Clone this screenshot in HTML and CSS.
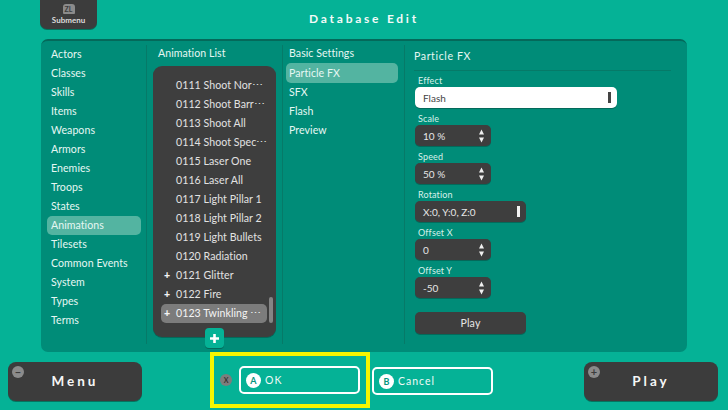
FILE: index.html
```html
<!DOCTYPE html>
<html lang="en">
<head>
<meta charset="utf-8">
<title>Database Edit</title>
<link rel="stylesheet" href="styles.css">
</head>
<body>
<div class="screen">
  <header class="header">
    <div class="submenu"><span class="zl">ZL</span><span>Submenu</span></div>
    <h1 class="title">Database Edit</h1>
  </header>
  <main class="panel">
    <nav class="side">
      <div class="item">Actors</div><div class="item">Classes</div><div class="item">Skills</div>
      <div class="item">Items</div><div class="item">Weapons</div><div class="item">Armors</div>
      <div class="item">Enemies</div><div class="item">Troops</div><div class="item">States</div>
      <div class="item active">Animations</div><div class="item">Tilesets</div><div class="item">Common Events</div>
      <div class="item">System</div><div class="item">Types</div><div class="item">Terms</div>
    </nav>
    <section class="anim">
      <div class="col-title">Animation List</div>
      <div class="list">
        <div class="row">0111 Shoot Nor⋯</div>
        <div class="row">0112 Shoot Barr⋯</div>
        <div class="row">0113 Shoot All</div>
        <div class="row">0114 Shoot Spec⋯</div>
        <div class="row">0115 Laser One</div>
        <div class="row">0116 Laser All</div>
        <div class="row">0117 Light Pillar 1</div>
        <div class="row">0118 Light Pillar 2</div>
        <div class="row">0119 Light Bullets</div>
        <div class="row">0120 Radiation</div>
        <div class="row"><span class="mark">+</span>0121 Glitter</div>
        <div class="row"><span class="mark">+</span>0122 Fire</div>
        <div class="row selected"><span class="mark">+</span>0123 Twinkling ⋯</div>
        <div class="scroll"></div>
        <div class="add"><svg width="11" height="11" viewBox="0 0 11 11"><path d="M4.200 1h2.600v3.200H10v2.600H6.800V10H4.200V6.800H1V4.200h3.200z" fill="#fff"/></svg></div>
      </div>
    </section>
    <section class="basic">
      <div class="item head">Basic Settings</div>
      <div class="item active">Particle FX</div>
      <div class="item">SFX</div>
      <div class="item">Flash</div>
      <div class="item">Preview</div>
    </section>
    <section class="detail">
      <div class="detail-title">Particle FX</div>
      <div class="field"><label class="label">Effect</label>
        <div class="input light w-wide"><span>Flash</span><i class="bar dark"></i></div></div>
      <div class="field"><label class="label">Scale</label>
        <div class="input w-num"><span>10 %</span><svg class="spin" width="5" height="14" viewBox="0 0 5 14"><path d="M2.500 0.500L5 5.500H0zM0 8.500H5L2.500 13.500z" fill="#f0f0f0"/></svg></div></div>
      <div class="field"><label class="label">Speed</label>
        <div class="input w-num"><span>50 %</span><svg class="spin" width="5" height="14" viewBox="0 0 5 14"><path d="M2.500 0.500L5 5.500H0zM0 8.500H5L2.500 13.500z" fill="#f0f0f0"/></svg></div></div>
      <div class="field"><label class="label">Rotation</label>
        <div class="input w-mid"><span>X:0, Y:0, Z:0</span><i class="bar"></i></div></div>
      <div class="field"><label class="label">Offset X</label>
        <div class="input w-num"><span>0</span><svg class="spin" width="5" height="14" viewBox="0 0 5 14"><path d="M2.500 0.500L5 5.500H0zM0 8.500H5L2.500 13.500z" fill="#f0f0f0"/></svg></div></div>
      <div class="field"><label class="label">Offset Y</label>
        <div class="input w-num"><span>-50</span><svg class="spin" width="5" height="14" viewBox="0 0 5 14"><path d="M2.500 0.500L5 5.500H0zM0 8.500H5L2.500 13.500z" fill="#f0f0f0"/></svg></div></div>
      <button class="play-small">Play</button>
    </section>
  </main>
  <footer class="footer">
    <div class="big"><span class="hint">−</span>Menu</div>
    <div class="center">
      <div class="focus">
        <span class="x">X</span>
        <div class="outline"><span class="circle">A</span>OK</div>
      </div>
      <div class="outline cancel"><span class="circle">B</span>Cancel</div>
    </div>
    <div class="big"><span class="hint">+</span>Play</div>
  </footer>
</div>
</body>
</html>
```
FILE: styles.css
```css
* { box-sizing: border-box; }
html, body { margin: 0; padding: 0; }
body {
  width: 728px; height: 410px; overflow: hidden;
  background: #05b296; color: #e8f5f1;
  font-family: Lato, "Noto Sans", sans-serif;
  font-size: 10.6px; letter-spacing: .05px;
}
.screen { width: 728px; height: 410px; display: flex; flex-direction: column; }

.header { height: 39px; position: relative; display: flex; justify-content: center; }
.title { margin: 10px 0 0; font-size: 12px; font-weight: 700; letter-spacing: 2.75px; line-height: 18px; color: #f2faf8; }
.submenu {
  position: absolute; left: 40px; top: 0; width: 57px; height: 29px;
  background: #3c3c3c; border-radius: 0 0 7px 7px; box-shadow: 0 1px 0 #04745f;
  display: flex; flex-direction: column; align-items: center; justify-content: flex-end;
  font-size: 8px; font-weight: 700; letter-spacing: 0; line-height: 11px; padding-bottom: 3px; color: #ddd;
}
.zl { width: 12px; height: 10px; margin-bottom: 1px; background: #8b8b8b; color: #3c3c3c; font-size: 7px; font-weight: 700; line-height: 10px; text-align: center; border-radius: 3px 3px 1px 1px; letter-spacing: 0; }

.panel {
  height: 313px; width: 646px; margin-left: 41px;
  display: flex; background: #008c78;
  border-top: 2px solid #04695a; border-radius: 7px;
}
.item { height: 19px; line-height: 18px; white-space: nowrap; color: #e6f7f3; }
.item.active { background: #53b4a1; border-radius: 5px; line-height: 19px; }

.side { width: 106px; margin: 4px 0 8px; padding: 0 5px 0 6px; border-right: 1px solid #067a68; }
.side .item { padding-left: 4px; }

.anim { width: 136px; margin: 4px 0 8px; padding-left: 6px; border-right: 1px solid #067a68; }
.col-title { height: 21px; line-height: 17px; padding-left: 5px; color: #e6f7f3; }
.list {
  position: relative; width: 123px; height: 271px;
  background: #3e3e3e; border-radius: 9px; padding: 10px 8px;
  box-shadow: 0 1px 0 #04695a;
}
.row { height: 19px; line-height: 18px; padding-left: 15px; position: relative; color: #e2e2e2; white-space: nowrap; }
.row.selected { background: #7c7c7c; border-radius: 5px; width: 106px; color: #f4f4f4; line-height: 19px; }
.mark { position: absolute; left: 3px; top: 0; color: #f4f4f4; font-weight: 900; letter-spacing: 0; }
.scroll { position: absolute; left: 116px; top: 231px; width: 4px; height: 26px; background: #858585; border-radius: 2px; }
.add {
  position: absolute; left: 52px; top: 262px; width: 19px; height: 20px;
  background: #05b296; border-radius: 4px; box-shadow: 0 1px 0 #04695a;
  display: flex; align-items: center; justify-content: center;
}

.basic { width: 122px; margin: 4px 0 8px; padding: 0 6px 0 3px; border-right: 1px solid #067a68; }
.basic .item { padding-left: 3px; }
.basic .head { height: 18px; line-height: 17px; }
.basic .active { height: 20px; line-height: 20px; }

.detail { flex: 1; padding: 8px 16px 0 9px; }
.detail-title { height: 22px; margin-bottom: -1px; line-height: 15px; border-bottom: 1px solid #067a68; letter-spacing: .6px; color: #e6f7f3; }
.field { height: 38px; margin-left: 1px; }
.label { display: block; height: 17px; padding: 4px 0 0 3px; line-height: 13px; font-size: 9px; letter-spacing: .15px; color: #d6f1ea; }
.input {
  height: 21px; background: #3e3e3e; border-radius: 5px;
  box-shadow: 0 1px 0 #04695a; color: #e6e6e6;
  display: flex; align-items: center; justify-content: space-between;
  padding: 0 6px 0 8px; font-size: 10px; letter-spacing: 0;
}
.input.light { background: #fff; color: #444; }
.w-wide { width: 202px; }
.w-num { width: 76px; padding-right: 7px; }
.w-mid { width: 111px; }
.bar { width: 3px; height: 11px; background: #f2f2f2; display: block; }
.bar.dark { background: #444; }
.spin { display: block; }
.play-small {
  display: block; width: 111px; height: 22px; margin: 14px 0 0 1px; padding: 0;
  border: 0; border-radius: 5px; background: #3e3e3e; color: #e6e6e6;
  box-shadow: 0 1px 0 #04695a; font: inherit; letter-spacing: .2px;
}

.footer { position: relative; flex: 1; display: flex; justify-content: space-between; padding: 10px 10px 0 8px; }
.big {
  position: relative; width: 134px; height: 39px; padding-bottom: 2px; background: #3c3c3c; border-radius: 8px;
  box-shadow: 0 1px 0 #04745f; display: flex; align-items: center; justify-content: center;
  font-size: 13.5px; font-weight: 700; letter-spacing: 3px; color: #f6f6f6;
}
.hint {
  position: absolute; left: 4px; top: 4px; width: 12px; height: 12px; border-radius: 50%;
  background: #8b8b8b; color: #3c3c3c; font-size: 11px; line-height: 12px; text-align: center; letter-spacing: 0;
}
.center { position: absolute; left: 210px; top: 0; display: flex; align-items: flex-start; }
.focus {
  width: 160px; height: 56px; border: 4px solid #f6f600; background: #05b296;
  display: flex; align-items: center; padding-left: 6px; gap: 7px;
}
.x { width: 12px; height: 12px; border-radius: 50%; background: #7d7d7d; color: #333; font-size: 7px; font-weight: 700; line-height: 12px; text-align: center; letter-spacing: 0; }
.outline {
  width: 121px; height: 28px; border: 2px solid #fff; border-radius: 5px;
  display: flex; align-items: center; padding-left: 5px; gap: 4px; color: #f0faf7; font-size: 10.5px; letter-spacing: 1px;
}
.cancel { margin: 15px 0 0 2px; }
.circle { width: 15px; height: 15px; border-radius: 50%; background: #fff; color: #05947e; font-size: 9px; font-weight: 700; line-height: 15px; text-align: center; letter-spacing: 0; }
```
